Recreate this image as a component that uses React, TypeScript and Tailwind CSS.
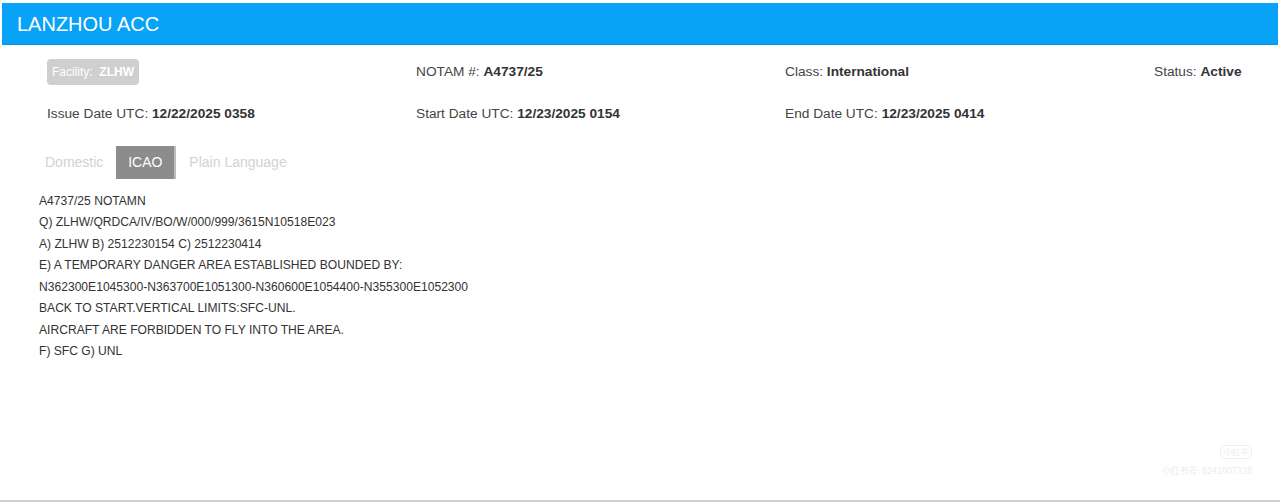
import React from 'react';

const lines = [
  'A4737/25 NOTAMN',
  'Q) ZLHW/QRDCA/IV/BO/W/000/999/3615N10518E023',
  'A) ZLHW B) 2512230154 C) 2512230414',
  'E) A TEMPORARY DANGER AREA ESTABLISHED BOUNDED BY:',
  'N362300E1045300-N363700E1051300-N360600E1054400-N355300E1052300',
  'BACK TO START.VERTICAL LIMITS:SFC-UNL.',
  'AIRCRAFT ARE FORBIDDEN TO FLY INTO THE AREA.',
  'F) SFC G) UNL',
];

function Field({ label, value }: { label: string; value: string }) {
  return (
    <div className="text-[13.7px] text-[#444] whitespace-nowrap">
      {label}: <span className="font-bold text-[#333]">{value}</span>
    </div>
  );
}

export default function App() {
  return (
    <div
      className="relative h-[502px] w-full bg-white border-b-2 border-[#cfcfcf] overflow-hidden"
      style={{ fontFamily: '"Liberation Sans", Arial, sans-serif' }}
    >
      <div className="mt-[3px] mx-[2px] h-[42px] bg-[#08a2f6] border-b border-[#0a8fd8] flex items-center pl-[15px]">
        <h1 className="text-[20px] text-white leading-none">LANZHOU ACC</h1>
      </div>

      <div className="grid grid-cols-[369px_369px_369px_auto] pl-[47px] pt-[14px] gap-y-[19px] items-center">
        <div>
          <span className="inline-flex items-center h-[26px] px-[5px] rounded-[4px] bg-[#cfcfcf] text-white text-[12px]">
            Facility:&nbsp;&nbsp;<span className="font-bold">ZLHW</span>
          </span>
        </div>
        <Field label="NOTAM #" value="A4737/25" />
        <Field label="Class" value="International" />
        <Field label="Status" value="Active" />
        <Field label="Issue Date UTC" value="12/22/2025 0358" />
        <Field label="Start Date UTC" value="12/23/2025 0154" />
        <Field label="End Date UTC" value="12/23/2025 0414" />
        <div />
      </div>

      <div className="flex items-center mt-[21px] pl-[45px] text-[14px]">
        <span className="text-[#d2d2d2] pr-[13px]">Domestic</span>
        <span className="h-[33px] w-[60px] flex items-center justify-center bg-[#8c8c8c] text-white border-r-2 border-[#bdbdbd]">
          ICAO
        </span>
        <span className="text-[#d2d2d2] pl-[13px]">Plain Language</span>
      </div>

      <div className="pl-[39px] pt-[12px] text-[12.1px] leading-[21.5px] text-[#333]">
        {lines.map((l) => (
          <div key={l}>{l}</div>
        ))}
      </div>

      <div className="absolute right-[28px] bottom-[23px] flex flex-col items-end text-[#ececec]">
        <span
          className="text-[8px] px-[3px] rounded-[4px] border border-[#f0f0f0] mb-[5px]"
          style={{ fontFamily: '"Noto Sans CJK SC", sans-serif' }}
        >
          小红书
        </span>
        <span className="text-[9px]" style={{ fontFamily: '"Noto Sans CJK SC", sans-serif' }}>
          小红书号: 6241007328
        </span>
      </div>
    </div>
  );
}
